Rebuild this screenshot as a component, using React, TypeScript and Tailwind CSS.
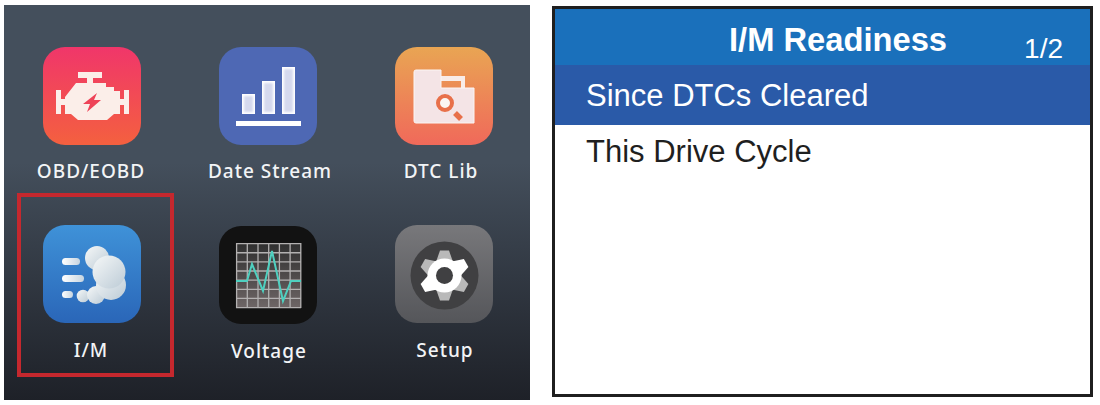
const labelFont = { fontFamily: '"Noto Sans", sans-serif' };

const EngineIcon = () => (
  <svg viewBox="0 0 98 98" className="w-full h-full">
    <defs>
      <linearGradient id="engineBg" x1="0" y1="0" x2="0" y2="1">
        <stop offset="0" stopColor="#f0366a" />
        <stop offset="1" stopColor="#f4603f" />
      </linearGradient>
    </defs>
    <rect width="98" height="98" fill="url(#engineBg)" />
    <g fill="#fbeee9">
      <rect x="35" y="25" width="24" height="6" />
      <rect x="44" y="30" width="6" height="7" />
      <path d="M22 50 L33 36 H63 V40 H71 V44 H77 V67 H71 L64 73 H35 L28 67 H22 Z" />
      <rect x="13" y="43" width="5" height="24" />
      <rect x="81" y="43" width="5" height="24" />
      <rect x="17" y="52" width="6" height="6" />
      <rect x="76" y="52" width="6" height="6" />
    </g>
    <path d="M54 46 L40 57 H47 L44 65 L58 53 H51 Z" fill="#ee4358" />
  </svg>
);

const BarsIcon = () => (
  <svg viewBox="0 0 98 98" className="w-full h-full bg-[#4e68b4]">
    <defs>
      <filter id="barBlur" x="-20%" y="-20%" width="140%" height="140%">
        <feGaussianBlur stdDeviation="1.2" />
      </filter>
    </defs>
    <g fill="#fff">
      <rect x="23" y="47" width="13" height="20" />
      <rect x="43" y="34" width="13" height="33" />
      <rect x="63" y="20" width="13" height="47" />
      <rect x="17" y="74" width="65" height="5" />
    </g>
    <g fill="#d5d9ee" filter="url(#barBlur)">
      <rect x="25" y="49" width="9" height="16" />
      <rect x="45" y="36" width="9" height="29" />
      <rect x="65" y="22" width="9" height="43" />
    </g>
  </svg>
);

const FolderIcon = () => (
  <svg viewBox="0 0 98 98" className="w-full h-full">
    <defs>
      <linearGradient id="folderBg" x1="0" y1="0" x2="0" y2="1">
        <stop offset="0" stopColor="#e9a553" />
        <stop offset="1" stopColor="#f0695a" />
      </linearGradient>
    </defs>
    <rect width="98" height="98" fill="url(#folderBg)" />
    <path d="M46 29 H70 V41 H66 V34 H46 Z" fill="#f8ece8" />
    <path d="M21 23 H46 V41 H79 V76 H21 Q19 76 19 74 V25 Q19 23 21 23 Z" fill="#f4e4e6" stroke="#fbf5f3" strokeWidth="1" />
    <circle cx="50" cy="56" r="7" fill="#fbf6f3" stroke="#e8704a" strokeWidth="4" />
    <path d="M60 66 L66 72" stroke="#e8704a" strokeWidth="5.5" />
  </svg>
);

const CloudIcon = () => (
  <svg viewBox="0 0 98 98" className="w-full h-full">
    <defs>
      <linearGradient id="cloudBg" x1="0" y1="0" x2="0" y2="1">
        <stop offset="0" stopColor="#3f92d8" />
        <stop offset="1" stopColor="#2a66b8" />
      </linearGradient>
      <linearGradient id="ball" x1="0" y1="0" x2="1" y2="1">
        <stop offset="0" stopColor="#f6f8f8" />
        <stop offset="1" stopColor="#bccbd6" />
      </linearGradient>
      <linearGradient id="pill" x1="0" y1="0" x2="1" y2="0">
        <stop offset="0" stopColor="#ffffff" />
        <stop offset="1" stopColor="#c6d4e0" />
      </linearGradient>
    </defs>
    <rect width="98" height="98" fill="url(#cloudBg)" />
    <rect x="19" y="33" width="18" height="7" rx="3.5" fill="url(#pill)" />
    <rect x="19" y="50" width="22" height="7" rx="3.5" fill="url(#pill)" />
    <rect x="19" y="66" width="11" height="7" rx="3.5" fill="url(#pill)" />
    <g fill="url(#ball)">
      <circle cx="40" cy="71" r="6.3" />
      <circle cx="53" cy="70" r="9" />
      <circle cx="54" cy="33" r="12" />
      <circle cx="68" cy="60" r="15" />
      <circle cx="66" cy="47" r="16.5" />
    </g>
  </svg>
);

const COLS = [0, 1, 2, 3, 4, 5, 6];
const ROWS = [0, 1, 2, 3, 4, 5, 6, 7];

const ScopeIcon = () => (
  <svg viewBox="0 0 98 98" className="w-full h-full bg-[#121212]">
    <defs>
      <linearGradient id="scopeBg" x1="0" y1="0" x2="0" y2="1">
        <stop offset="0" stopColor="#2f2f2f" />
        <stop offset="1" stopColor="#6e6666" />
      </linearGradient>
    </defs>
    <rect x="17" y="17" width="65" height="65" fill="url(#scopeBg)" />
    <g stroke="#b3b1b1" strokeWidth="1.3">
      {COLS.map((i) => (
        <line key={i} x1={17.6 + i * 10.7} y1="17" x2={17.6 + i * 10.7} y2="82" />
      ))}
      {ROWS.map((i) => (
        <line key={i} x1="17" y1={17.6 + i * 9.14} x2="82" y2={17.6 + i * 9.14} />
      ))}
    </g>
    <path d="M17 55 H28 L33 38 L44 65 L53 25 L64 75 L72 55 H82" fill="none" stroke="#4fd0c0" strokeWidth="2" />
  </svg>
);

const TOOTH_ANGLES = [0, 60, 120, 180, 240, 300];

const GearIcon = () => (
  <svg viewBox="0 0 98 98" className="w-full h-full">
    <defs>
      <linearGradient id="gearBg" x1="0" y1="0" x2="0" y2="1">
        <stop offset="0" stopColor="#78787b" />
        <stop offset="1" stopColor="#55565a" />
      </linearGradient>
    </defs>
    <rect width="98" height="98" fill="url(#gearBg)" />
    <circle cx="49.5" cy="50.5" r="34" fill="#404042" />
    {TOOTH_ANGLES.map((a) => (
      <path
        key={a}
        d="M41 37 L45 25.5 H54 L58 37 Z"
        fill={a === 60 || a === 240 ? "#ffffff" : "#b9b9b9"}
        transform={`rotate(${a} 49.5 50.5)`}
      />
    ))}
    <circle cx="49.5" cy="50.5" r="17" fill="#ffffff" />
    <circle cx="49.5" cy="50.5" r="8.5" fill="#404042" />
  </svg>
);

type TileProps = {
  label: string;
  iconClass?: string;
  labelClass?: string;
  children: React.ReactNode;
};

const AppTile = ({ label, iconClass = "", labelClass = "", children }: TileProps) => (
  <div className="flex flex-col items-center">
    <div className={`w-[98px] h-[98px] rounded-[22px] overflow-hidden ${iconClass}`}>{children}</div>
    <span className={`text-[19px] font-medium leading-[26px] tracking-[1px] text-[#f2f4f6] whitespace-nowrap ${labelClass}`} style={labelFont}>
      {label}
    </span>
  </div>
);

export default function App() {
  return (
    <div className="w-[1100px] h-[405px] bg-white flex items-start pl-[4px] pt-[5px] overflow-hidden">
      <div className="relative w-[526px] h-[395px] shrink-0 bg-gradient-to-b from-[#444f5c] from-40% to-[#1e2128] pt-[42px] pl-[39px]">
        <div className="grid grid-cols-[98px_98px_98px] gap-x-[78px] gap-y-[41px]">
          <AppTile label="OBD/EOBD" labelClass="mt-[13px] -translate-x-[1px]"><EngineIcon /></AppTile>
          <AppTile label="Date Stream" labelClass="mt-[13px] translate-x-[2px]"><BarsIcon /></AppTile>
          <AppTile label="DTC Lib" labelClass="mt-[13px] -translate-x-[3px]"><FolderIcon /></AppTile>
          <AppTile label="I/M" labelClass="mt-[14px] -translate-x-[1px]"><CloudIcon /></AppTile>
          <AppTile label="Voltage" iconClass="mt-[1px]" labelClass="mt-[14px] translate-x-[1px]"><ScopeIcon /></AppTile>
          <AppTile label="Setup" labelClass="mt-[14px] translate-x-[1px]"><GearIcon /></AppTile>
        </div>
        <div className="absolute left-[13px] top-[188px] w-[157px] h-[184px] border-[4px] border-[#c5282e]" />
      </div>

      <div className="ml-[22px] mt-[1px] w-[541px] h-[391px] shrink-0 border-[3px] border-[#1f1f1f] bg-white flex flex-col" style={{ fontFamily: '"Liberation Sans", Arial, sans-serif' }}>
        <div className="h-[56px] bg-[#1a70bb] flex items-center pl-[174px] pr-[27px] text-white">
          <span className="mt-[6px] text-[32.7px] font-bold leading-none">I/M Readiness</span>
          <span className="ml-auto mt-[24px] text-[28px] leading-none">1/2</span>
        </div>
        <div className="h-[60px] bg-[#2a5aa8] flex items-center pl-[31px] text-white text-[31px] leading-none">Since DTCs Cleared</div>
        <div className="h-[52px] flex items-center pl-[31px] text-[#1f1f1f] text-[31px] leading-none">This Drive Cycle</div>
      </div>
    </div>
  );
}
